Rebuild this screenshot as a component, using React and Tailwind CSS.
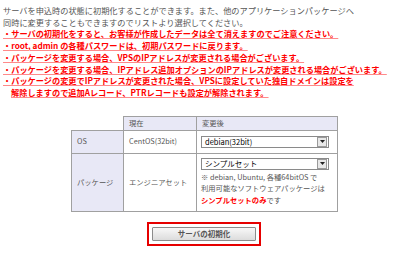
const FONT = { fontFamily: '"Noto Sans CJK JP", "Liberation Sans", sans-serif' }

const warnings = [
  '・サーバの初期化をすると、お客様が作成したデータは全て消えますのでご注意ください。',
  '・root, admin の各種パスワードは、初期パスワードに戻ります。',
  '・パッケージを変更する場合、VPSのIPアドレスが変更される場合がございます。',
  '・パッケージを変更する場合、IPアドレス追加オプションのIPアドレスが変更される場合がございます。',
  '・パッケージの変更でIPアドレスが変更された場合、VPSに設定していた独自ドメインは設定を',
]

function Select({ value }) {
  return (
    <div className="flex items-center w-[128px] h-[12px] border border-[#8a8a8a] bg-white">
      <span className="flex-1 pl-[3px] text-[7.5px] leading-none text-black">{value}</span>
      <span className="flex items-center justify-center w-[10px] h-[10px] mr-px border border-[#9a9a9a] bg-[#e8e8e8]">
        <svg width="5" height="3" viewBox="0 0 5 3"><path d="M0 0h5L2.5 3z" fill="#222" /></svg>
      </span>
    </div>
  )
}

export default function App() {
  return (
    <div className="w-[400px] h-[254px] bg-white overflow-hidden" style={FONT}>
      {/* 説明文 */}
      <div className="pt-[5px] pl-[3px] text-[8.2px] leading-[11.7px] whitespace-nowrap">
        <p className="text-[#555]">サーバを申込時の状態に初期化することができます。また、他のアプリケーションパッケージへ</p>
        <p className="text-[#555]">同時に変更することもできますのでリストより選択してください。</p>
        {warnings.map((w) => (
          <p key={w} className="text-[#ff0000] font-bold text-[8.2px] underline decoration-[#ff8a8a] underline-offset-[1px]">{w}</p>
        ))}
        <p className="pl-[8px] text-[#ff0000] font-bold text-[8.2px] underline decoration-[#ff8a8a] underline-offset-[1px]">解除しますので追加Aレコード、PTRレコードも設定が解除されます。</p>
      </div>

      {/* 変更テーブル */}
      <table className="ml-[71px] mt-[17px] border-collapse text-[7.3px] text-[#555]">
        <tbody>
          <tr className="h-[14px]">
            <td className="w-[52px]"></td>
            <td className="w-[73px] border border-[#a0a0a0] bg-[#e8e8f6] pl-[5px]">現在</td>
            <td className="w-[141px] border border-[#a0a0a0] bg-[#e8e8f6] pl-[5px]">変更後</td>
          </tr>
          <tr className="h-[23px]">
            <td className="border border-[#a0a0a0] bg-[#e8e8f6] pl-[5px]">OS</td>
            <td className="border border-[#a0a0a0] pl-[5px]">CentOS(32bit)</td>
            <td className="border border-[#a0a0a0] pl-[4px]">
              <Select value="debian(32bit)" />
            </td>
          </tr>
          <tr className="h-[58px]">
            <td className="border border-[#a0a0a0] bg-[#e8e8f6] pl-[5px]">パッケージ</td>
            <td className="border border-[#a0a0a0] pl-[5px]">エンジニアセット</td>
            <td className="border border-[#a0a0a0] pl-[4px] align-top pt-[4px]">
              <Select value="シンプルセット" />
              <div className="mt-[2px] leading-[11.5px] whitespace-nowrap">
                <p>※ debian, Ubuntu, 各種64bitOS で</p>
                <p>利用可能なソフトウェアパッケージは</p>
                <p><span className="text-[#ff0000] font-bold">シンプルセットのみ</span>です</p>
              </div>
            </td>
          </tr>
        </tbody>
      </table>

      {/* 初期化ボタン */}
      <div className="ml-[147px] mt-[10px] w-[114px] h-[24px] border-2 border-[#e60000] flex items-center justify-center">
        <button className="w-[104px] h-[14px] border border-[#8c8c8c] rounded-[1px] bg-gradient-to-b from-[#f8f8f8] to-[#dcdcdc] text-[7.5px] font-bold text-[#555] leading-none">
          サーバの初期化
        </button>
      </div>
    </div>
  )
}
